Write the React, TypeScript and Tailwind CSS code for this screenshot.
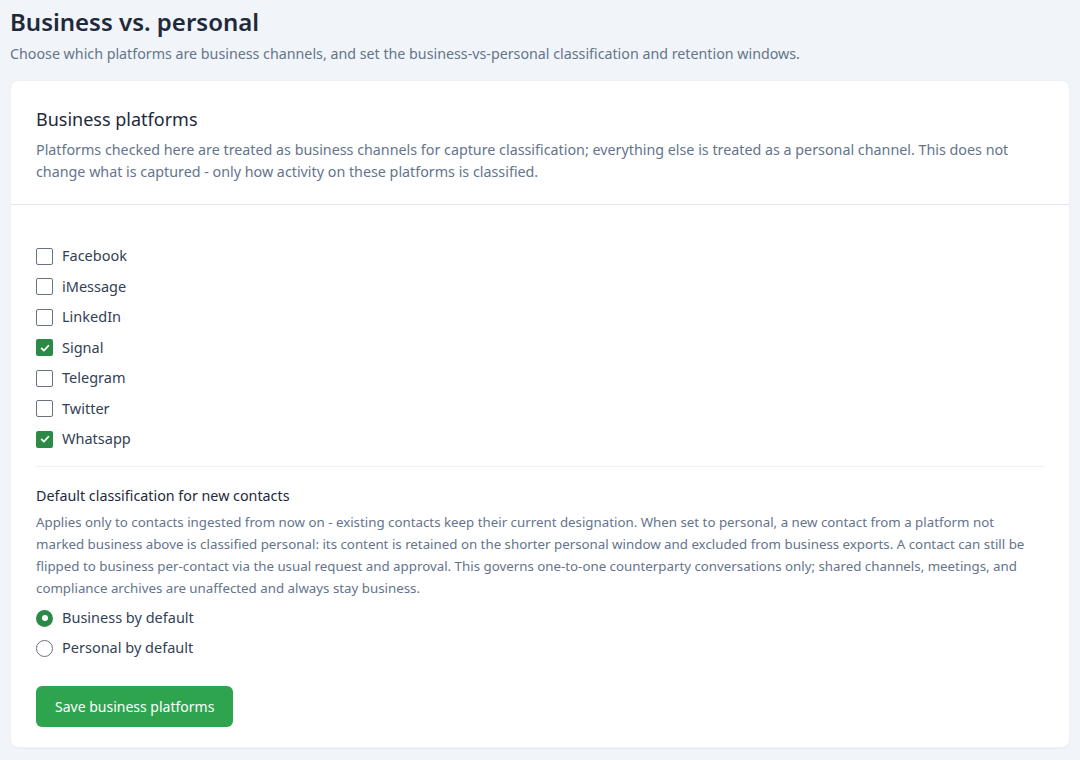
import { useState } from "react";

const platforms = ["Facebook", "iMessage", "LinkedIn", "Signal", "Telegram", "Twitter", "Whatsapp"];

const CheckIcon = () => (
  <svg viewBox="0 0 16 16" className="h-3 w-3" fill="none" stroke="white" strokeWidth={2.4} strokeLinecap="round" strokeLinejoin="round">
    <path d="M3.5 8.5l3 3 6-6.5" />
  </svg>
);

export default function App() {
  const [checked, setChecked] = useState<Record<string, boolean>>({ Signal: true, Whatsapp: true });
  const [mode, setMode] = useState<"business" | "personal">("business");

  return (
    <div className="min-h-[760px] bg-[#f1f4f8] px-[10px] pt-[6px] pb-3 text-[#1f2937]" style={{ fontFamily: '"Noto Sans", "Open Sans", sans-serif' }}>
      <h1 className="text-[24px] font-semibold leading-[32px] text-[#1e293b]">Business vs. personal</h1>
      <p className="mt-[6px] text-[14.25px] leading-[20px] text-[#64748b]">
        Choose which platforms are business channels, and set the business-vs-personal classification and retention windows.
      </p>

      <div className="mt-[16px] rounded-lg border border-[#eef1f5] bg-white shadow-[0_1px_2px_rgba(15,23,42,0.04)]">
        <div className="border-b border-[#e5e7eb] px-[25px] pt-[25px] pb-[21px]">
          <h2 className="text-[18px] leading-[26px] text-[#1e293b]">Business platforms</h2>
          <p className="mt-[7px] text-[14.3px] leading-[22px] text-[#64748b]">
            Platforms checked here are treated as business channels for capture classification; everything else is treated as a personal channel. This does not change what is captured - only how activity on these platforms is classified.
          </p>
        </div>

        <div className="px-[25px] pt-[42px] pb-[20px]">
          <div className="flex flex-col gap-[12.5px]">
            {platforms.map((p) => {
              const on = !!checked[p];
              return (
                <label key={p} className="flex h-[18px] cursor-pointer items-center gap-[9px] text-[14.5px] text-[#334155]">
                  <input
                    type="checkbox"
                    className="hidden"
                    checked={on}
                    onChange={() => setChecked((c) => ({ ...c, [p]: !c[p] }))}
                  />
                  <span
                    className={
                      on
                        ? "flex h-[17px] w-[17px] items-center justify-center rounded-[2px] bg-[#2a8a46]"
                        : "flex h-[17px] w-[17px] items-center justify-center rounded-[2px] border border-[#6b7280] bg-white"
                    }
                  >
                    {on ? <CheckIcon /> : null}
                  </span>
                  {p}
                </label>
              );
            })}
          </div>

          <div className="mt-[18px] border-t border-[#eef0f3] pt-[18px]">
            <h3 className="text-[14.3px] leading-[22px] text-[#1e293b]">Default classification for new contacts</h3>
            <p className="mt-[4px] text-[13.3px] leading-[22px] text-[#64748b]">
              Applies only to contacts ingested from now on - existing contacts keep their current designation. When set to personal, a new contact from a platform not marked business above is classified personal: its content is retained on the shorter personal window and excluded from business exports. A contact can still be flipped to business per-contact via the usual request and approval. This governs one-to-one counterparty conversations only; shared channels, meetings, and compliance archives are unaffected and always stay business.
            </p>

            <div className="mt-[10px] flex flex-col gap-[12px]">
              {(
                [
                  ["business", "Business by default"],
                  ["personal", "Personal by default"],
                ] as const
              ).map(([value, label]) => {
                const on = mode === value;
                return (
                  <label key={value} className="flex h-[18px] cursor-pointer items-center gap-[9px] text-[14.5px] text-[#334155]">
                    <input type="radio" className="hidden" checked={on} onChange={() => setMode(value)} />
                    <span
                      className={
                        on
                          ? "flex h-[17px] w-[17px] items-center justify-center rounded-full bg-[#2a8a46]"
                          : "h-[17px] w-[17px] rounded-full border border-[#6b7280] bg-white"
                      }
                    >
                      {on ? <span className="h-[6px] w-[6px] rounded-full bg-white" /> : null}
                    </span>
                    {label}
                  </label>
                );
              })}
            </div>

            <button
              type="button"
              className="mt-[29px] h-[41px] rounded-md bg-[#2ea44f] px-[19px] text-[14px] text-white hover:bg-[#2c974b]"
            >
              Save business platforms
            </button>
          </div>
        </div>
      </div>
    </div>
  );
}
